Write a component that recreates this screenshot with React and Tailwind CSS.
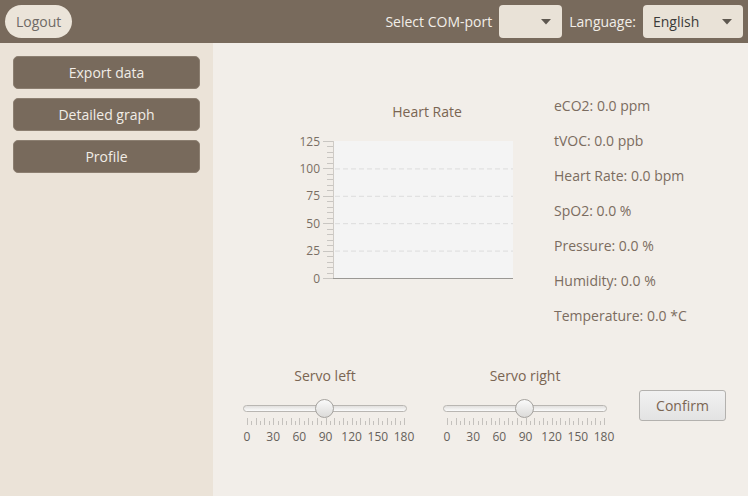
import React from 'react';

const metrics = [
  'eCO2: 0.0 ppm',
  'tVOC: 0.0 ppb',
  'Heart Rate: 0.0 bpm',
  'SpO2: 0.0 %',
  'Pressure: 0.0 %',
  'Humidity: 0.0 %',
  'Temperature: 0.0 *C',
];

function Caret() {
  return (
    <svg width="10" height="6" viewBox="0 0 10 6">
      <path d="M0 0 L10 0 L5 5.5 Z" fill="#5e5850" />
    </svg>
  );
}

function SideButton({ children }) {
  return (
    <button className="h-[33px] w-full rounded-[5px] border border-[#8c7f71] bg-[#786a5c] text-[14px] text-[#f1ede7]">
      {children}
    </button>
  );
}

function HeartChart() {
  const top = 11;
  const bottom = 148;
  const left = 39;
  const right = 218;
  const step = (bottom - top) / 5;
  const labels = [125, 100, 75, 50, 25, 0];
  const minor = [];
  for (let i = 0; i <= 25; i++) minor.push(top + (i * step) / 5);
  return (
    <svg width="225" height="160" viewBox="0 0 225 160">
      <rect x={left} y={top} width={right - left} height={bottom - top} fill="#f4f4f4" />
      {labels.slice(1, 5).map((v, i) => (
        <line
          key={v}
          x1={left + 1}
          x2={right}
          y1={top + (i + 1) * step + 0.5}
          y2={top + (i + 1) * step + 0.5}
          stroke="#dcdcdc"
          strokeDasharray="5 3"
        />
      ))}
      {minor.map((y, i) => (
        <line key={i} x1={i % 5 === 0 ? 28 : 32} x2={38} y1={Math.round(y) + 0.5} y2={Math.round(y) + 0.5} stroke="#c9c6c2" />
      ))}
      <line x1={38.5} x2={38.5} y1={top} y2={bottom} stroke="#cfcbc6" />
      <line x1={38} x2={right} y1={bottom + 0.5} y2={bottom + 0.5} stroke="#9a9894" />
      {labels.map((v, i) => (
        <text
          key={v}
          x={25}
          y={top + i * step + 4.5}
          textAnchor="end"
          fontSize="12"
          fill="#7a6e64"
          fontFamily="'Open Sans', sans-serif"
        >
          {v}
        </text>
      ))}
    </svg>
  );
}

function ServoSlider({ label }) {
  const ticks = [];
  for (let i = 0; i <= 36; i++) ticks.push(i);
  return (
    <div className="flex w-[172px] flex-col items-center">
      <div className="text-[14px] text-[#7a6552]">{label}</div>
      <div className="relative mt-[13px] h-[20px] w-[164px]">
        <div className="absolute left-0 right-0 top-[6px] h-[7px] rounded-full border border-[#b9b6b2] bg-gradient-to-b from-[#e2e0de] to-[#fbfbfb]" />
        <div className="absolute left-[72px] top-0 h-[19px] w-[19px] rounded-full border border-[#a5a29e] bg-gradient-to-b from-[#fafafa] to-[#dcdbd9]" />
      </div>
      <svg width="164" height="10" viewBox="0 0 164 10" className="-mt-[2px]">
        {ticks.map((i) => {
          const x = Math.round(4 + (i * 157) / 36) + 0.5;
          return <line key={i} x1={x} x2={x} y1={i % 2 === 0 ? 1 : 4} y2={8} stroke="#c4c1bd" />;
        })}
      </svg>
      <div className="relative mt-[1px] h-[16px] w-[164px] text-[12px] text-[#66615b]">
        {[0, 30, 60, 90, 120, 150, 180].map((v, i) => (
          <span
            key={v}
            className="absolute top-0 -translate-x-1/2"
            style={{ left: `${4 + (i * 157) / 6}px` }}
          >
            {v}
          </span>
        ))}
      </div>
    </div>
  );
}

export default function App() {
  return (
    <div className="flex h-[496px] w-[748px] flex-col overflow-hidden bg-[#f2eee9] font-['Open_Sans',sans-serif]">
      <header className="flex h-[43px] shrink-0 items-center bg-[#786a5c] px-[5px]">
        <button className="h-[33px] rounded-full bg-[#ebe4d9] px-[11px] text-[14px] text-[#6f6a66]">
          Logout
        </button>
        <div className="ml-auto flex items-center">
          <span className="mr-[7px] text-[14px] text-[#f2eee8]">Select COM-port</span>
          <div className="flex h-[33px] w-[63px] items-center justify-end rounded-[4px] bg-[#e9e2d7] pr-[11px]">
            <Caret />
          </div>
          <span className="ml-[7px] mr-[7px] text-[14px] text-[#f2eee8]">Language:</span>
          <div className="flex h-[33px] w-[100px] items-center justify-between rounded-[4px] bg-[#e9e2d7] pl-[10px] pr-[11px] text-[14px] text-[#3b3a38]">
            English
            <Caret />
          </div>
        </div>
      </header>
      <div className="flex flex-1">
        <aside className="flex w-[213px] shrink-0 flex-col gap-[9px] bg-[#ebe3d8] px-[13px] pt-[13px]">
          <SideButton>Export data</SideButton>
          <SideButton>Detailed graph</SideButton>
          <SideButton>Profile</SideButton>
        </aside>
        <main className="flex flex-1 flex-col">
          <div className="flex pt-[50px]">
            <div className="ml-[82px] flex w-[225px] flex-col pt-[8px]">
              <div className="pl-[39px] text-center text-[14px] text-[#7a6552]">Heart Rate</div>
              <div className="mt-[8px]">
                <HeartChart />
              </div>
            </div>
            <div className="ml-[34px] flex flex-col gap-[14.5px] pt-[3px] text-[14px] leading-[20.5px] text-[#7b6c60]">
              {metrics.map((m) => (
                <div key={m}>{m}</div>
              ))}
            </div>
          </div>
          <div className="mt-auto mb-[52px] flex items-start pl-[26px]">
            <ServoSlider label="Servo left" />
            <div className="ml-[28px]">
              <ServoSlider label="Servo right" />
            </div>
            <button className="ml-[28px] mt-[25px] h-[31px] w-[87px] rounded-[3px] border border-[#b3b1ae] bg-gradient-to-b from-[#f1f1f1] to-[#e3e3e3] text-[14px] text-[#7a6552]">
              Confirm
            </button>
          </div>
        </main>
      </div>
    </div>
  );
}
